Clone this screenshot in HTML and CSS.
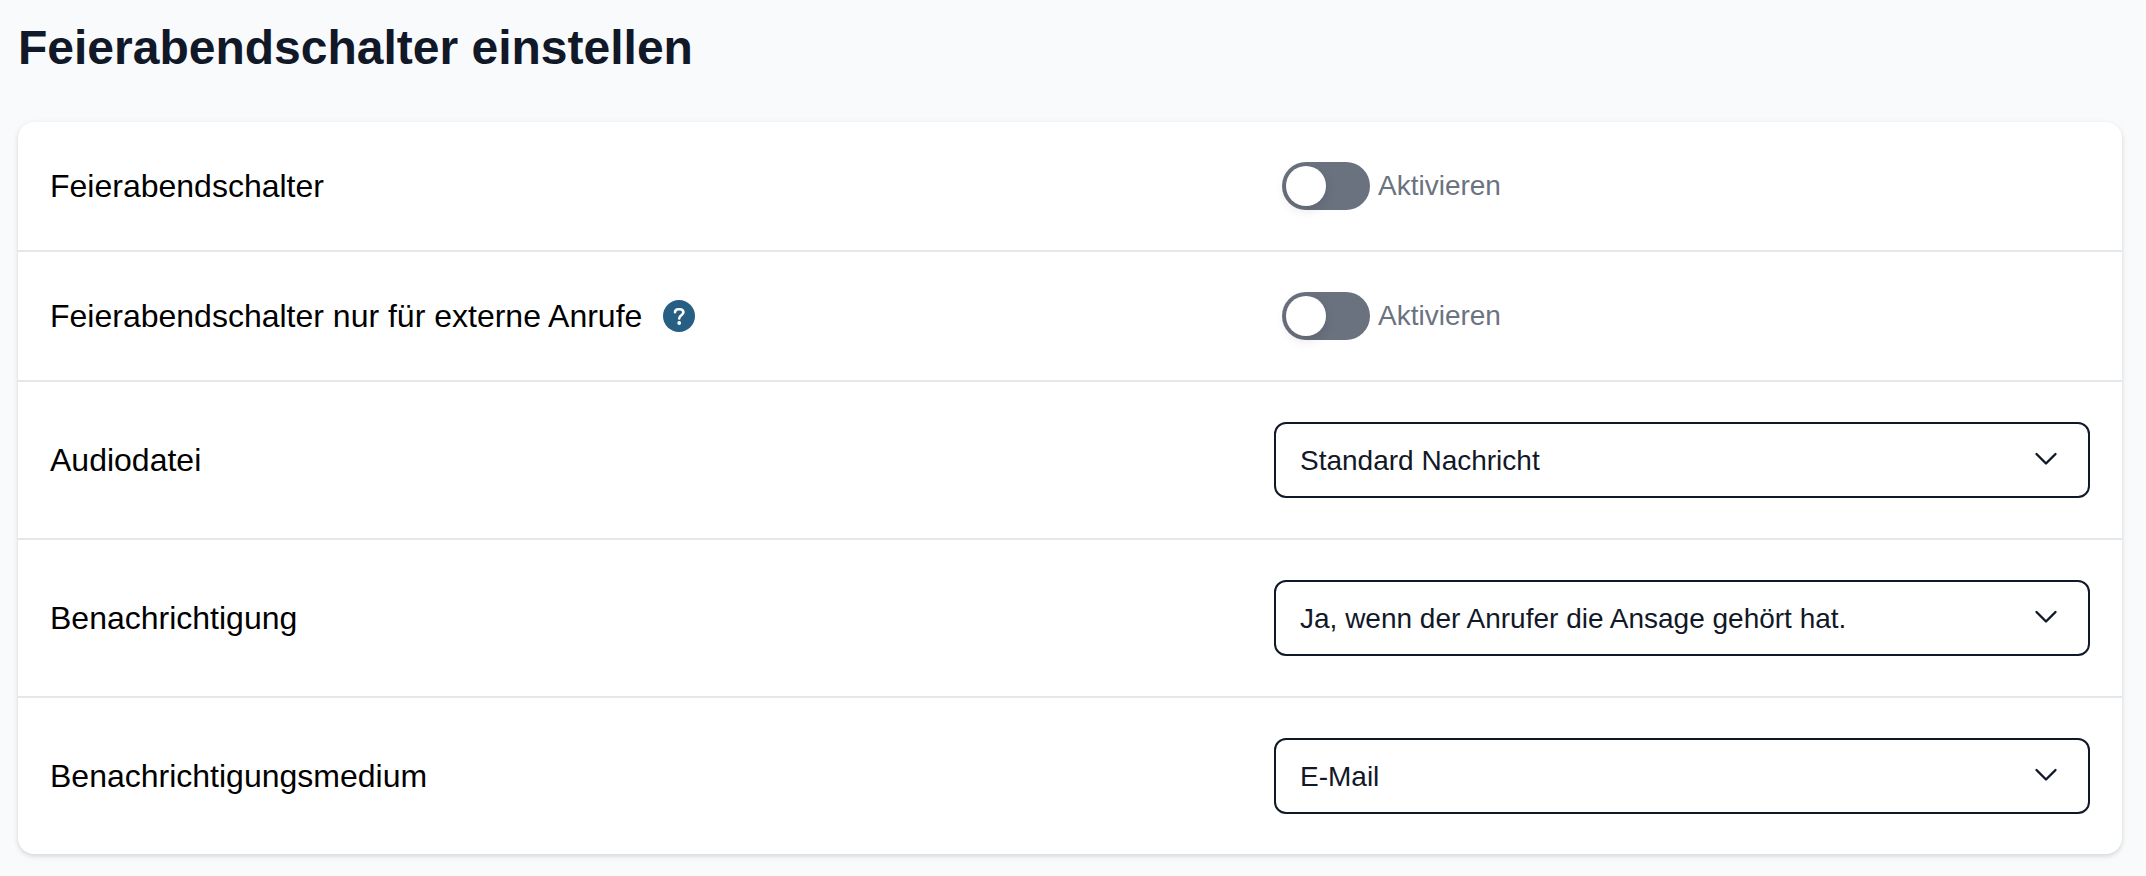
FILE: index.html
```html
<!DOCTYPE html>
<html lang="de">

<head>
    <meta charset="UTF-8">
    <meta name="viewport" content="width=device-width, initial-scale=1.0">
    <title>Feierabendschalter einstellen</title>
    <link rel="stylesheet" href="styles.css">
</head>

<body>

    <main class="container">
        <h1>Feierabendschalter einstellen</h1>

        <form class="card">
            <div class="row">
                <span class="row__label" id="switch-label">Feierabendschalter</span>
                <div class="row__control toggle">
                    <input type="checkbox" id="switch" class="toggle__input" aria-describedby="switch-label">
                    <label for="switch">Aktivieren</label>
                </div>
            </div>

            <div class="row">
                <div class="row__label">
                    <span id="external-label">Feierabendschalter nur für externe Anrufe</span>
                    <button type="button" class="help" aria-label="Hilfe">
                        <svg viewBox="0 0 32 32" aria-hidden="true">
                            <circle cx="16" cy="16" r="16" fill="#275f84"/>
                            <path d="M12 12.2C12 10.4 13.4 9.2 15.2 9.2H17C18.9 9.2 20.4 10.5 20.4 12.3C20.4 15.3 16.2 15.2 16.2 18.4" fill="none" stroke="#fff" stroke-width="2.6" stroke-linecap="round" stroke-linejoin="round"/>
                            <circle cx="16.2" cy="23" r="1.9" fill="#fff"/>
                        </svg>
                    </button>
                </div>
                <div class="row__control toggle">
                    <input type="checkbox" id="external" class="toggle__input" aria-describedby="external-label">
                    <label for="external">Aktivieren</label>
                </div>
            </div>

            <div class="row">
                <label class="row__label" for="audio">Audiodatei</label>
                <div class="row__control select">
                    <select id="audio">
                        <option>Standard Nachricht</option>
                    </select>
                    <svg class="select__icon" viewBox="0 0 24 24" aria-hidden="true">
                        <path d="M2.5 6L12 15.5L21.5 6"/>
                    </svg>
                </div>
            </div>

            <div class="row">
                <label class="row__label" for="notify">Benachrichtigung</label>
                <div class="row__control select">
                    <select id="notify">
                        <option>Ja, wenn der Anrufer die Ansage gehört hat.</option>
                    </select>
                    <svg class="select__icon" viewBox="0 0 24 24" aria-hidden="true">
                        <path d="M2.5 6L12 15.5L21.5 6"/>
                    </svg>
                </div>
            </div>

            <div class="row">
                <label class="row__label" for="medium">Benachrichtigungsmedium</label>
                <div class="row__control select">
                    <select id="medium">
                        <option>E-Mail</option>
                    </select>
                    <svg class="select__icon" viewBox="0 0 24 24" aria-hidden="true">
                        <path d="M2.5 6L12 15.5L21.5 6"/>
                    </svg>
                </div>
            </div>
        </form>
    </main>

</body>

</html>
```
FILE: styles.css
```css
*,
*:before,
*:after {
    box-sizing: border-box;
}

body {
    margin: 0;
    background: #f9fafc;
    color: #000;
    font-family: "Liberation Sans", Arial, sans-serif;
    font-size: 32px;
    line-height: 40px;
}

.container {
    padding: 24px 24px 22px 18px;
}

h1 {
    margin: 0 0 50px;
    color: #111827;
    font-size: 48px;
    font-weight: bold;
    line-height: 48px;
}

.card {
    background: #fff;
    border-radius: 16px;
    box-shadow: 0 2px 6px rgba(0, 0, 0, .1), 0 2px 4px rgba(0, 0, 0, .06);
}

.row {
    display: grid;
    grid-template-columns: 3fr 2fr;
    align-items: center;
    padding: 40px 32px;
}

.row + .row {
    border-top: 2px solid #e5e7eb;
}

.row__label {
    display: flex;
    align-items: center;
    gap: 21px;
}

.help {
    width: 32px;
    height: 32px;
    padding: 0;
    border: 0;
    background: none;
    cursor: pointer;
}

.help svg {
    display: block;
}

/* Toggle */
.toggle {
    display: flex;
    align-items: center;
    gap: 8px;
    padding-left: 8px;
    color: #6b7280;
    font-size: 28px;
}

.toggle__input {
    appearance: none;
    width: 88px;
    height: 48px;
    margin: 0;
    padding: 4px;
    border-radius: 24px;
    background: #6b727f;
    cursor: pointer;
}

.toggle__input:before {
    content: "";
    display: block;
    width: 40px;
    height: 40px;
    border-radius: 50%;
    background: #fff;
    box-shadow: 0 4px 12px rgba(0, 0, 0, .12);
}

.toggle__input:checked {
    background: #275f84;
}

.toggle__input:checked:before {
    margin-left: 40px;
}

/* Select, the chevron shares its grid cell */
.select {
    display: grid;
    align-items: center;
    color: #111827;
}

.select select {
    grid-area: 1 / 1;
    appearance: none;
    width: 100%;
    height: 76px;
    padding: 0 80px 0 24px;
    border: 2px solid #111827;
    border-radius: 12px;
    background: #fff;
    color: inherit;
    font-family: inherit;
    font-size: 28px;
}

.select__icon {
    grid-area: 1 / 1;
    justify-self: end;
    width: 24px;
    height: 24px;
    margin-right: 32px;
    fill: none;
    stroke: currentColor;
    stroke-width: 2.4;
    stroke-linecap: round;
    stroke-linejoin: round;
    pointer-events: none;
}
```
